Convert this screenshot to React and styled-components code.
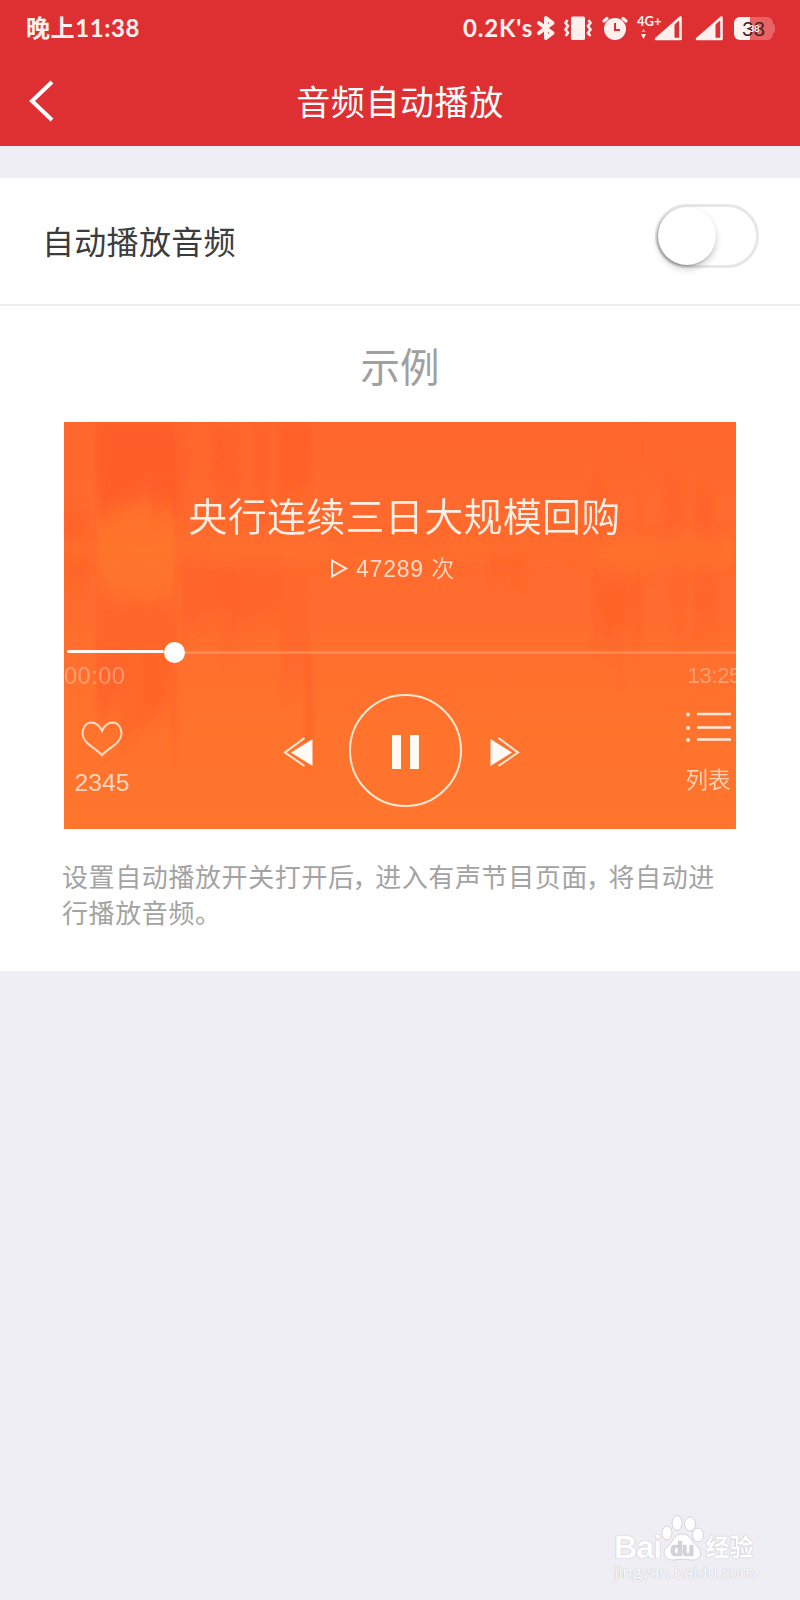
import React from "react";
import styled, { createGlobalStyle } from "styled-components";

const GlobalStyle = createGlobalStyle`
  * { box-sizing: border-box; }
  body {
    margin: 0;
    background: #efeef4;
    font-family: Roboto, "Noto Sans CJK SC", sans-serif;
  }
`;

const Screen = styled.main`
  position: relative;
  width: 800px;
  height: 1600px;
  overflow: hidden;
  background: #efeef4;
`;

const TopArea = styled.header`
  height: 146px;
  background: #de3033;
  color: #fff;
`;

const StatusBar = styled.div`
  display: flex;
  align-items: center;
  height: 56px;
  padding: 0 27px 0 26px;
  color: #fff0ee;
`;

const Clock = styled.div`
  flex: 1;
  font: 700 24px/56px Lato, "Noto Sans CJK SC", sans-serif;
  letter-spacing: 0.6px;
  white-space: nowrap;
`;

const Speed = styled.div`
  width: 74px;
  font: 700 24px/56px Lato, sans-serif;
  letter-spacing: 0.8px;
  white-space: nowrap;
`;

const StatusIcon = styled.svg`
  display: block;
  flex: none;
  width: ${(p) => p.$w}px;
  height: 26px;
  margin-right: ${(p) => p.$gap || 0}px;
  overflow: visible;
`;

const Network = styled.div`
  display: flex;
  flex-direction: column;
  align-items: flex-start;
  width: 17px;
  height: 26px;
  font: 700 13px/12px Lato, sans-serif;
  white-space: nowrap;
  svg { margin: 2px 0 0 3px; }
`;

const Battery = styled.div`
  position: relative;
  display: flex;
  align-items: center;
  justify-content: center;
  width: 39px;
  height: 23px;
  border-radius: 6px;
  background: linear-gradient(90deg, #fff3f2 16px, #e96365 16px);
  color: #40201f;
  font: 400 20px/23px Lato, sans-serif;
  &::after {
    content: "";
    position: absolute;
    left: 39px;
    top: 7px;
    width: 2px;
    height: 9px;
    border-radius: 0 3px 3px 0;
    background: #e96365;
  }
`;

const BatterySmall = styled.span`
  position: absolute;
  left: 15px;
  top: 7px;
  color: #fff;
  font: 700 9px/10px Lato, sans-serif;
`;

const NavBar = styled.div`
  display: grid;
  grid-template-columns: 80px 1fr 80px;
  align-items: center;
  height: 90px;
`;

const BackIcon = styled.svg`
  width: 27px;
  height: 42px;
  margin: 0 0 1px 28px;
`;

const PageTitle = styled.h1`
  margin: 0 0 1px;
  font: 400 34px/50px "Noto Sans CJK SC", sans-serif;
  letter-spacing: 0.6px;
  text-align: center;
`;

const SettingRow = styled.section`
  display: flex;
  justify-content: space-between;
  align-items: flex-start;
  height: 128px;
  margin-top: 32px;
  padding: 26px 41px 0 42px;
  border-bottom: 2px solid #eeeeef;
  background: #fff;
`;

const SettingLabel = styled.span`
  padding-top: 12px;
  color: #3c3c3c;
  font: 400 32px/48px "Noto Sans CJK SC", sans-serif;
  letter-spacing: 0.3px;
`;

const Switch = styled.button`
  width: 104px;
  height: 64px;
  padding: 0;
  border: 3px solid #e7e7e7;
  border-radius: 32px;
  background: #fff;
`;

const Knob = styled.span`
  display: block;
  width: 58px;
  height: 58px;
  border-radius: 50%;
  background: #fff;
  box-shadow: -1px 1px 2px rgba(0, 0, 0, 0.3), 0 4px 7px rgba(0, 0, 0, 0.2);
`;

const Example = styled.section`
  height: 665px;
  padding: 30px 64px 0;
  background: #fff;
`;

const ExampleTitle = styled.h2`
  margin: 0 0 28px;
  color: #a0a0a0;
  font: 400 39.5px/58px "Noto Sans CJK SC", sans-serif;
  text-align: center;
`;

const Player = styled.div`
  position: relative;
  height: 407px;
  overflow: hidden;
  background: linear-gradient(#ff672d, #ff6d2d 50%, #ff732d 75%, #ff752d);
  color: #fff;
`;

const Wave = styled.svg`
  position: absolute;
  inset: 0;
`;

const PlayerBody = styled.div`
  position: relative;
  height: 100%;
  padding-top: 63px;
`;

const TrackTitle = styled.h3`
  margin: 0;
  padding-left: 9px;
  color: #fff0e6;
  font: 350 39px/58px "Noto Sans CJK SC", sans-serif;
  letter-spacing: 0.3px;
  text-align: center;
`;

const PlayCount = styled.div`
  display: flex;
  align-items: center;
  height: 44px;
  margin-top: 4px;
  padding-left: 266px;
  gap: 8px;
  color: rgba(255, 244, 232, 0.8);
  font: 350 23px/44px "Liberation Sans", "Noto Sans CJK SC", sans-serif;
  letter-spacing: 0.8px;
`;

const Progress = styled.div`
  display: flex;
  align-items: center;
  height: 22px;
  margin-top: 50px;
  padding-left: 3px;
`;

const Played = styled.span`
  width: 97px;
  height: 3px;
  margin-bottom: 2px;
  border-radius: 2px;
  background: #fff7ee;
`;

const Thumb = styled.span`
  width: 21px;
  height: 21px;
  border-radius: 50%;
  background: #fff;
`;

const Remaining = styled.span`
  flex: 1;
  height: 3px;
  background: rgba(255, 255, 255, 0.19);
`;

const Times = styled.div`
  display: flex;
  justify-content: space-between;
  height: 26px;
  margin-right: -5px;
  color: rgba(255, 255, 255, 0.32);
  font: 400 23.5px/26px "Liberation Sans", sans-serif;
`;

const Time = styled.span`
  font-size: ${(p) => (p.$end ? 22.5 : 23.5)}px;
  letter-spacing: ${(p) => (p.$end ? -0.5 : 0.5)}px;
`;

const Controls = styled.div`
  display: flex;
  align-items: flex-start;
  height: 130px;
`;

const SideAction = styled.div`
  display: flex;
  flex: none;
  flex-direction: column;
  align-items: center;
  width: ${(p) => p.$w}px;
  margin-top: ${(p) => p.$top}px;
  margin-left: ${(p) => p.$left}px;
  color: rgba(255, 245, 235, 0.76);
  font: 350 ${(p) => p.$size}px/32px "Liberation Sans", "Noto Sans CJK SC", sans-serif;
  white-space: nowrap;
  svg { display: block; margin-bottom: ${(p) => p.$gap}px; }
`;

const Transport = styled.div`
  display: flex;
  flex: none;
  align-items: center;
  margin: 5px 0 0 152px;
`;

const SkipIcon = styled.svg`
  width: 31px;
  height: 32px;
  margin-top: 3px;
  transform: ${(p) => (p.$flip ? "scaleX(-1)" : "none")};
`;

const PauseButton = styled.div`
  display: flex;
  align-items: center;
  justify-content: center;
  gap: 9px;
  width: 113px;
  height: 113px;
  margin: 0 28px 0 36px;
  border: 2px solid #ffe6d2;
  border-radius: 50%;
`;

const PauseBar = styled.i`
  width: 9px;
  height: 34px;
  margin-top: 2px;
  background: #fffaf2;
`;

const Description = styled.p`
  margin: 29px 0 0 -2px;
  width: 672px;
  color: #a3a3a3;
  font: 400 26px/36px "Noto Sans CJK SC", sans-serif;
  letter-spacing: 0.6px;
  white-space: nowrap;
`;

const Comma = styled.span`
  margin-left: -2px;
  letter-spacing: -3.5px;
`;

const Watermark = styled.div`
  position: absolute;
  left: 614px;
  top: 1513px;
  width: 145px;
  color: #fff;
  text-shadow: 0 0 1px #b4b4bc, 0 0 1px #c4c4ca;
`;

const WatermarkBrand = styled.div`
  display: flex;
  align-items: flex-end;
  height: 50px;
  font: 700 32px/32px "Liberation Sans", sans-serif;
  letter-spacing: -0.8px;
`;

const Paw = styled.svg`
  width: 44px;
  height: 48px;
  margin-bottom: 1px;
  flex: none;
`;

const WatermarkCn = styled.span`
  font: 700 24px/34px "Noto Sans CJK SC", sans-serif;
  letter-spacing: 0;
`;

const WatermarkUrl = styled.div`
  margin-top: -2px;
  font: 400 16.6px/22px "Open Sans", sans-serif;
  letter-spacing: 0;
`;

// x, y, width, height, opacity, growth direction of each streak group
const streakGroups = [
  [32, 0, 80, 95, 0.42, 1], [32, 180, 80, 130, 0.24, 1],
  [112, 10, 12, 75, 0.18, 1], [145, 0, 16, 60, 0.2, 1], [150, 20, 25, 75, 0.18, 1],
  [190, 5, 13, 92, 0.22, 1], [215, 0, 32, 85, 0.34, 1],
  [118, 142, 100, 60, 0.24, 1], [155, 155, 18, 90, 0.16, 1], [217, 155, 28, 110, 0.2, 1],
  [241, 240, 8, 130, 0.3, 1], [35, 230, 24, 70, 0.2, 1], [75, 230, 29, 65, 0.15, 1],
  [526, 50, 16, 65, 0.22, -1], [528, 150, 48, 65, 0.26, 1], [541, 170, 18, 75, 0.16, 1],
  [600, 55, 20, 62, 0.2, -1], [605, 145, 16, 65, 0.2, 1],
  [630, 65, 20, 52, 0.2, -1], [630, 150, 22, 55, 0.22, 1],
  [424, 128, 37, 26, 0.26, 1], [0, 94, 24, 25, 0.3, 1], [0, 134, 24, 23, 0.3, 1],
  [286, 122, 100, 5, 0.25, 1], [470, 122, 58, 7, 0.25, 1], [575, 0, 2, 220, 0.2, 1],
];

const streaks = streakGroups.flatMap(([x, y, w, h, o, dir], g) => {
  const count = Math.max(1, Math.round(w / 5));
  const step = w / count;
  return Array.from({ length: count }, (_, i) => {
    const length = h * (0.72 + ((i * 37 + g * 17) % 41) / 90);
    return {
      x: x + i * step,
      y: dir > 0 ? y : y + h - length,
      w: step + 0.2,
      h: length,
      o,
    };
  });
});

function Waveform() {
  return (
    <Wave width="672" height="407" aria-hidden="true">
      <defs>
        <filter id="soft" x="-5%" y="-5%" width="110%" height="110%">
          <feGaussianBlur stdDeviation="1.6 9" />
        </filter>
      </defs>
      <g filter="url(#soft)">
        {streaks.map((s, i) => (
          <rect key={i} x={s.x} y={s.y} width={s.w} height={s.h} fill="#ff5422" opacity={s.o} />
        ))}
        <path d="M34 100Q50 80 64 84T106 82L112 120 108 168 85 178 48 170 34 145Z" fill="#ff7a2b" opacity=".6" />
        <path d="M0 122L35 124 240 119 270 126 420 122 530 124 560 118 600 123 620 114 648 125 668 115V140L610 137 570 148 530 131 240 133 120 130 0 132Z" fill="#ff782b" opacity=".65" />
      </g>
    </Wave>
  );
}

function SignalIcon({ gap }) {
  return (
    <StatusIcon $w={29} $gap={gap} viewBox="0 0 29 26">
      <path d="M26.500 2.500V24H2Z" fill="none" stroke="currentColor" strokeWidth="2.600" strokeLinejoin="round" />
      <path d="M20.500 8V24H2Z" fill="currentColor" />
    </StatusIcon>
  );
}

function StatusIcons() {
  return (
    <>
      <StatusIcon $w={18} $gap={9} viewBox="0 0 18 26">
        <path d="M2 8L15.500 18 9 23V3L15.500 8 2 18" fill="none" stroke="currentColor" strokeWidth="4" strokeLinejoin="round" strokeLinecap="round" />
      </StatusIcon>
      <StatusIcon $w={28} $gap={10} viewBox="0 0 28 26">
        <rect x="7" y="1.5" width="14" height="23.5" rx="1.5" fill="currentColor" />
        <path d="M3.500 5L1.500 8 4 11 1.500 14.500 4 18 1.500 21M24.500 5L26.500 8 24 11 26.500 14.500 24 18 26.500 21" fill="none" stroke="currentColor" strokeWidth="2.600" />
      </StatusIcon>
      <StatusIcon $w={26} $gap={9} viewBox="0 0 26 26">
        <circle cx="13" cy="14" r="11" fill="currentColor" />
        <path d="M2 6L5 3.500M24 6L21 3.500" stroke="currentColor" strokeWidth="3.200" strokeLinecap="round" />
        <path d="M13 8V15H18" fill="none" stroke="#de3033" strokeWidth="2" />
      </StatusIcon>
      <Network>
        4G+
        <svg width="7" height="11" viewBox="0 0 7 11">
          <path d="M3.500 0L5.500 3H1.500Z" fill="#f3a5a3" />
          <path d="M1 5H6L3.500 10Z" fill="currentColor" />
        </svg>
      </Network>
      <SignalIcon gap={12} />
      <SignalIcon gap={10} />
      <Battery>
        38
        <BatterySmall>38</BatterySmall>
      </Battery>
    </>
  );
}

function Skip({ flip }) {
  return (
    <SkipIcon $flip={flip} viewBox="0 0 31 32">
      <path d="M30.500 3V30L9 16.500Z" fill="#fffaf4" />
      <path d="M22.500 2L3 16.500 22.500 30" fill="none" stroke="#ffe9d9" strokeWidth="2" />
    </SkipIcon>
  );
}

function PlayerPreview() {
  return (
    <Player>
      <Waveform />
      <PlayerBody>
        <TrackTitle>央行连续三日大规模回购</TrackTitle>
        <PlayCount>
          <svg width="18" height="20" viewBox="0 0 18 20">
            <path d="M2 1.500L16 9.500 2 17.500Z" fill="none" stroke="#fff0e2" strokeWidth="2" />
          </svg>
          <span>47289 次</span>
        </PlayCount>
        <Progress>
          <Played />
          <Thumb />
          <Remaining />
        </Progress>
        <Times>
          <Time>00:00</Time>
          <Time $end>13:25</Time>
        </Times>
        <Controls>
          <SideAction $w={56} $top={32} $left={10} $gap={10} $size={24.7}>
            <svg width="42" height="36" viewBox="0 0 42 36">
              <path d="M21 10C18 3 14 1.500 10 1.500C4 2 1.500 8 1.500 13C2 22 13 26 21 34C29 26 40 22 40.500 13C40.500 8 38 2 32 1.500C28 1.500 24 3 21 10Z" fill="none" stroke="#ffdac2" strokeWidth="2" />
            </svg>
            2345
          </SideAction>
          <Transport>
            <Skip />
            <PauseButton>
              <PauseBar />
              <PauseBar />
            </PauseButton>
            <Skip flip />
          </Transport>
          <SideAction $w={46} $top={22} $left={164} $gap={22} $size={22.5}>
            <svg width="46" height="32" viewBox="0 0 46 32">
              <path d="M12 3H46M12 16.500H46M12 28.500H46" stroke="#ffeada" strokeWidth="2.600" />
              <path d="M3 3.500H3.010M3 17H3.010M3 29H3.010" stroke="#ffeada" strokeWidth="4" strokeLinecap="round" />
            </svg>
            列表
          </SideAction>
        </Controls>
      </PlayerBody>
    </Player>
  );
}

export default function App() {
  return (
    <>
      <GlobalStyle />
      <Screen>
        <TopArea>
          <StatusBar>
            <Clock>晚上11:38</Clock>
            <Speed>0.2K's</Speed>
            <StatusIcons />
          </StatusBar>
          <NavBar>
            <BackIcon viewBox="0 0 27 42">
              <path d="M24 2L4 21 24 40" fill="none" stroke="#fff" strokeWidth="4" />
            </BackIcon>
            <PageTitle>音频自动播放</PageTitle>
          </NavBar>
        </TopArea>
        <SettingRow>
          <SettingLabel>自动播放音频</SettingLabel>
          <Switch role="switch" aria-checked="false" aria-label="自动播放音频">
            <Knob />
          </Switch>
        </SettingRow>
        <Example>
          <ExampleTitle>示例</ExampleTitle>
          <PlayerPreview />
          <Description>
            设置自动播放开关打开后<Comma>，</Comma>进入有声节目页面<Comma>，</Comma>将自动进
            <br />
            行播放音频。
          </Description>
        </Example>
        <Watermark>
          <WatermarkBrand>
            Bai
            <Paw viewBox="0 0 44 48">
              <g fill="#fff" stroke="#d4d3d9" strokeWidth="1">
                <ellipse cx="16" cy="9" rx="5" ry="7.500" />
                <ellipse cx="29" cy="10" rx="5.500" ry="7" />
                <ellipse cx="6" cy="19" rx="5" ry="7" />
                <ellipse cx="37" cy="21" rx="5.500" ry="7" />
                <path d="M21 20C12 20 12 29 6 33C0 38 4 47 13 46C19 45 24 45 30 46C41 47 42 37 36 32C30 28 30 20 21 20Z" />
              </g>
              <text x="21" y="42" textAnchor="middle" fontFamily="Liberation Sans" fontSize="20" fontWeight="700" fill="#d4d3d9">du</text>
            </Paw>
            <WatermarkCn>经验</WatermarkCn>
          </WatermarkBrand>
          <WatermarkUrl>jingyan.baidu.com</WatermarkUrl>
        </Watermark>
      </Screen>
    </>
  );
}
